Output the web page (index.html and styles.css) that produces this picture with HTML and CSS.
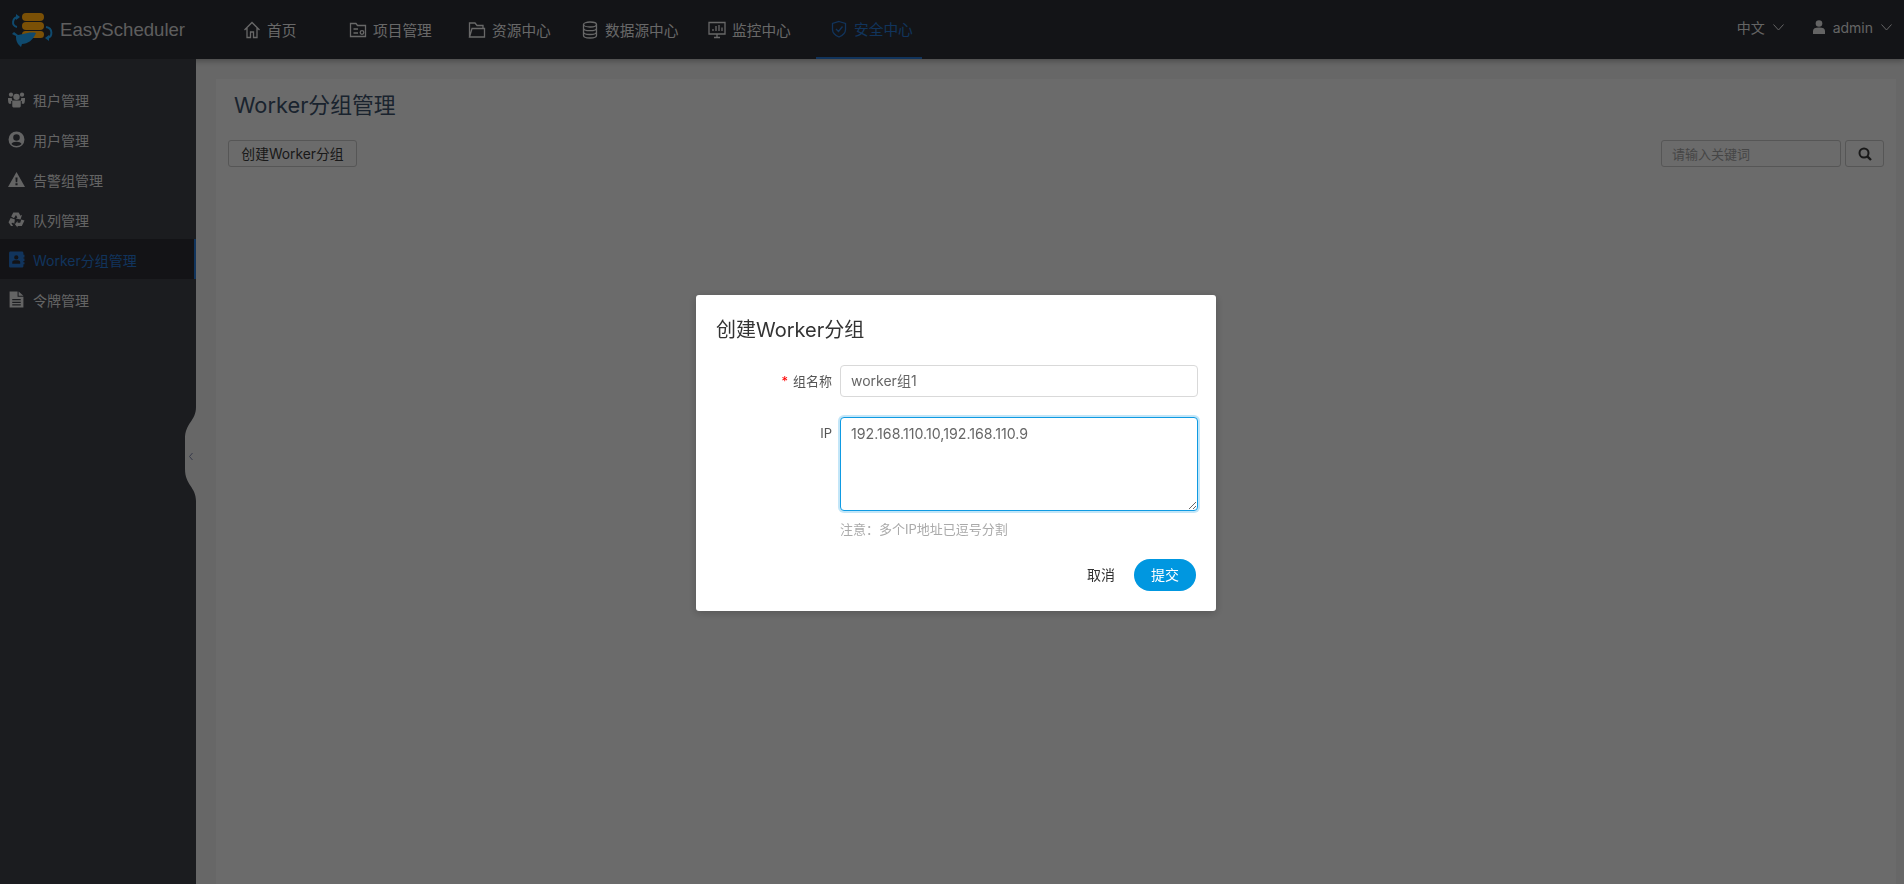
FILE: index.html
```html
<!DOCTYPE html>
<html lang="zh">
<head>
    <meta charset="UTF-8">
    <title>EasyScheduler</title>
    <link rel="stylesheet" href="styles.css">
</head>
<body>
    <header class="topbar">
        <div class="logo">
            <svg width="44" height="38" viewBox="0 0 44 38">
                <rect x="13" y="2" width="22" height="8" rx="4" fill="#f5a00c"/>
                <rect x="13" y="11" width="22" height="8" rx="4" fill="#f5a00c"/>
                <rect x="13" y="20" width="22" height="7" rx="3.5" fill="#f5a00c"/>
                <path d="M10 6 C3 6 2 15 8 16" fill="none" stroke="#1e94dc" stroke-width="2"/>
                <path d="M7 3 L11 6 L7 9 Z" fill="#1e94dc"/>
                <path d="M37 16 C44 17 44 26 38 27" fill="none" stroke="#1e94dc" stroke-width="2"/>
                <path d="M40 24 L36 27 L40 30 Z" fill="#1e94dc"/>
                <path d="M5 21 L9 24 L14 23 C18 22 23 21 27 22 C24 29 19 33 13 33 L12 36 L9 33 C7 30 7 27 7 25 L3 23 Z" fill="#1e94dc"/>
            </svg>
            <span class="logo-text">EasyScheduler</span>
        </div>
        <nav class="nav">
            <a class="nav-item">
                <svg class="nav-icon" viewBox="0 0 18 18"><path d="M1.5 9 L9 1.5 L16.5 9 M4 7 V16.5 H7.5 V11 H10.5 V16.5 H14 V7"/></svg>
                <span>首页</span>
            </a>
            <a class="nav-item">
                <svg class="nav-icon" viewBox="0 0 18 18"><path d="M1.5 15.5 V2.5 H7 L8.5 4.5 H16.5 V15.5 Z M4.5 8 H9 M4.5 12 H9"/><circle cx="13" cy="11.5" r="1.8"/></svg>
                <span>项目管理</span>
            </a>
            <a class="nav-item">
                <svg class="nav-icon" viewBox="0 0 18 18"><path d="M1.5 16 V2 H7 L9 4.5 H15 V7.5 M1.5 16 L4 7.5 H16.5 V16 Z"/></svg>
                <span>资源中心</span>
            </a>
            <a class="nav-item">
                <svg class="nav-icon" viewBox="0 0 18 18"><ellipse cx="9" cy="3.5" rx="6.5" ry="2.5"/><path d="M2.5 3.5 V14.5 C2.5 16 5.5 17 9 17 C12.5 17 15.5 16 15.5 14.5 V3.5 M2.5 7.2 C2.5 8.7 5.5 9.7 9 9.7 C12.5 9.7 15.5 8.7 15.5 7.2 M2.5 11 C2.5 12.5 5.5 13.5 9 13.5 C12.5 13.5 15.5 12.5 15.5 11"/></svg>
                <span>数据源中心</span>
            </a>
            <a class="nav-item">
                <svg class="nav-icon" viewBox="0 0 18 18"><path d="M1 1.5 H17 V13 H1 Z M6 16.5 H12 M9 13 V16.5 M5 10 V8 M8 10 V5 M11 10 V4 M14 10 V6.5"/></svg>
                <span>监控中心</span>
            </a>
            <a class="nav-item active">
                <svg class="nav-icon" viewBox="0 0 18 18"><path d="M9 1.5 L15.5 3.5 V9.5 C15.5 13 12.5 15.5 9 17 C5.5 15.5 2.5 13 2.5 9.5 V3.5 Z M6 9 L8.5 11.5 L12.5 6.5"/></svg>
                <span>安全中心</span>
            </a>
        </nav>
        <div class="top-right">
            <span class="top-link">中文
                <svg class="chevron" viewBox="0 0 11 7"><path d="M0.5 0.5 L5.5 6 L10.5 0.5"/></svg>
            </span>
            <span class="top-link user">
                <svg class="user-icon" viewBox="0 0 12 14"><circle cx="6" cy="3.5" r="3.3"/><path d="M0 14 V11 C0 8.5 2 7.5 6 7.5 C10 7.5 12 8.5 12 11 V14 Z"/></svg>
                admin
                <svg class="chevron" viewBox="0 0 11 7"><path d="M0.5 0.5 L5.5 6 L10.5 0.5"/></svg>
            </span>
        </div>
    </header>

    <div class="body-wrap">
        <aside class="sidebar">
            <a class="side-item">
                <svg class="side-icon" viewBox="0 0 16 16"><circle cx="8" cy="5.5" r="3"/><circle cx="2.8" cy="3.5" r="2"/><circle cx="13.2" cy="3.5" r="2"/><path d="M0 6.5 H3.5 L4 9.5 H3 V12 H1 C0 11 0 8 0 6.5 Z M16 6.5 H12.5 L12 9.5 H13 V12 H15 C16 11 16 8 16 6.5 Z M4 9 H12 V14 C12 15 11 15.5 10 15.5 H6 C5 15.5 4 15 4 14 Z"/></svg>
                <span>租户管理</span>
            </a>
            <a class="side-item">
                <svg class="side-icon" viewBox="0 0 16 16"><path fill-rule="evenodd" d="M8 0.5 A7.5 7.5 0 1 0 8 15.5 A7.5 7.5 0 1 0 8 0.5 Z M8 3 A3 3 0 1 1 8 9.2 A3 3 0 1 1 8 3 Z M3.2 12.2 C4 10.6 5.5 10 8 10 C10.5 10 12 10.6 12.8 12.2 C11.6 13.4 10 14 8 14 C6 14 4.4 13.4 3.2 12.2 Z"/></svg>
                <span>用户管理</span>
            </a>
            <a class="side-item">
                <svg class="side-icon" viewBox="0 0 16 16"><path fill-rule="evenodd" d="M8 1 L16 15 H0 Z M7 6 L7.3 10.5 H8.7 L9 6 Z M7 11.5 V13.3 H9 V11.5 Z"/></svg>
                <span>告警组管理</span>
            </a>
            <a class="side-item">
                <svg class="side-icon" viewBox="0 0 16 16"><path d="M5 1.5 H10 L11.8 4.4 L13.2 3.6 L11.8 8 L7.4 7 L8.8 6.2 L7.5 3.8 L5.6 6.8 L3 5.2 Z M2.5 6.5 L6.5 8 L5.8 12.3 L5 11 L3.2 11.2 L4.8 14 H2.8 L0.5 10.5 Z M15.5 9 L13 14 H9 V15.5 L6.5 12.5 L9 9.5 V11 H11.5 L12.5 8 Z"/></svg>
                <span>队列管理</span>
            </a>
            <a class="side-item active">
                <svg class="side-icon" viewBox="0 0 16 16"><path fill-rule="evenodd" d="M2.5 0.5 H13 C14 0.5 14.5 1 14.5 2 V3.5 H15.5 V6 H14.5 V7 H15.5 V9.5 H14.5 V10.5 H15.5 V12.5 H14.5 V14 C14.5 15 14 15.5 13 15.5 H2.5 C1.5 15.5 1 15 1 14 V2 C1 1 1.5 0.5 2.5 0.5 Z M7.8 4 A2 2 0 1 0 7.8 8 A2 2 0 1 0 7.8 4 Z M4 12 H11.5 V10.5 C11.5 9.3 10.5 8.8 7.8 8.8 C5 8.8 4 9.3 4 10.5 Z"/></svg>
                <span>Worker分组管理</span>
            </a>
            <a class="side-item">
                <svg class="side-icon" viewBox="0 0 16 16"><path fill-rule="evenodd" d="M1.5 0.5 H9 V5.5 H14.5 V15.5 H1.5 Z M10 0.5 L14.5 4.5 H10 Z M4 7.5 V8.7 H12 V7.5 Z M4 10 V11.2 H12 V10 Z M4 12.5 V13.7 H12 V12.5 Z"/></svg>
                <span>令牌管理</span>
            </a>
            <svg class="collapse" width="11" height="94" viewBox="0 0 11 94">
                <path d="M11 0 C11 14 0 16 0 32 V62 C0 78 11 80 11 94 Z" fill="#cfcfcf"/>
                <path d="M7.5 46 L4.5 49.5 L7.5 53" fill="none" stroke="#6c7394" stroke-width="1"/>
            </svg>
        </aside>
        <main class="content">
            <section class="panel">
                <h1 class="panel-title">Worker分组管理</h1>
                <div class="toolbar">
                    <button class="btn btn-create">创建Worker分组</button>
                    <div class="search">
                        <input class="search-input" type="text" placeholder="请输入关键词">
                        <button class="btn search-btn">
                            <svg width="14" height="14" viewBox="0 0 14 14"><circle cx="6" cy="6" r="4.5" fill="none" stroke="#333" stroke-width="2"/><path d="M9.3 9.3 L13 13" stroke="#333" stroke-width="2.4"/></svg>
                        </button>
                    </div>
                </div>
            </section>
        </main>
    </div>

    <div class="mask">
        <div class="modal">
            <div class="modal-title">创建Worker分组</div>
            <div class="form">
                <label class="form-label"><i class="star">*</i>组名称</label>
                <input class="field" type="text" value="worker组1">
                <label class="form-label">IP</label>
                <div>
                    <textarea class="field area">192.168.110.10,192.168.110.9</textarea>
                    <div class="hint">注意：多个IP地址已逗号分割</div>
                </div>
            </div>
            <div class="modal-foot">
                <button class="link-btn">取消</button>
                <button class="submit-btn">提交</button>
            </div>
        </div>
    </div>
</body>
</html>
```

FILE: styles.css
```css
* { box-sizing: border-box; }
html, body { height: 100%; }
body {
    margin: 0;
    overflow: hidden;
    font-family: Inter, "Noto Sans CJK SC", sans-serif;
    font-size: 14px;
    color: #333;
    background: #cfcfcf;
}

.topbar {
    height: 59px;
    display: flex;
    align-items: stretch;
    background: #26282f;
    box-shadow: 0 2px 6px rgba(0, 0, 0, 0.3);
    position: relative;
}
.logo {
    width: 229px;
    display: flex;
    align-items: center;
    padding: 0 0 0 9px;
}
.logo svg { margin-top: 1px; }
.logo-text {
    margin-left: 7px;
    font-family: "Liberation Sans", sans-serif;
    font-size: 18.6px;
    color: #bcbcbc;
}
.nav {
    display: grid;
    grid-template-columns: 106px 119px 113px 127px 122px 106px;
}
.nav-item {
    display: flex;
    align-items: center;
    padding: 0 0 0 14px;
    color: #d0d0d0;
    font-size: 14.7px;
    white-space: nowrap;
}
.nav-icon {
    width: 18px;
    height: 18px;
    margin-right: 6px;
    fill: none;
    stroke: currentColor;
    stroke-width: 1.3;
}
.nav-item.active {
    color: #2268b8;
    border-bottom: 2px solid #2268b8;
}
.top-right {
    margin-left: auto;
    display: flex;
    align-items: center;
    padding: 0 12px 5px 0;
    color: #c8c8c8;
    font-size: 14px;
}
.top-link { display: flex; align-items: center; }
.user { margin-left: 29px; }
.chevron {
    width: 11px;
    height: 7px;
    margin-left: 8px;
    fill: none;
    stroke: currentColor;
}
.user-icon {
    width: 12px;
    height: 14px;
    margin-right: 8px;
    fill: currentColor;
}

.body-wrap {
    display: flex;
    height: calc(100% - 59px);
}
.sidebar {
    width: 196px;
    flex: none;
    padding-top: 20px;
    background: #36383f;
    position: relative;
}
.side-item {
    height: 40px;
    display: flex;
    align-items: center;
    padding: 1px 0 0 8px;
    color: #c8c8c8;
    font-size: 14px;
}
.side-icon {
    width: 17px;
    height: 17px;
    margin-right: 8px;
    fill: currentColor;
}
.side-item.active {
    color: #2268b8;
    background: #26272c;
    border-right: 2px solid #2268b8;
}
.collapse {
    position: absolute;
    right: 0;
    top: 348px;
}

.content {
    flex: 1;
    padding: 20px 8px 0 20px;
}
.panel {
    height: 100%;
    background: #d6d6d6;
}
.panel-title {
    margin: 0;
    height: 61px;
    padding: 9px 18px 0;
    font-size: 21.8px;
    line-height: 34px;
    font-weight: 400;
    color: #34465c;
}
.toolbar {
    display: flex;
    justify-content: space-between;
    padding: 0 12px;
}
.btn {
    height: 27px;
    padding: 0 12px 2px;
    font: inherit;
    font-size: 13.8px;
    color: #333;
    background: #d6d6d6;
    border: 1px solid #acacac;
    border-radius: 3px;
}
.btn-create { width: 129px; }
.search { display: flex; gap: 4px; }
.search-input {
    width: 180px;
    height: 27px;
    padding: 0 10px;
    font: inherit;
    font-size: 13px;
    background: #d6d6d6;
    border: 1px solid #acacac;
    border-radius: 3px;
}
.search-input::placeholder { color: #8c8c8c; }
.search-btn {
    width: 39px;
    padding: 0;
    display: flex;
    align-items: center;
    justify-content: center;
}

.mask {
    position: fixed;
    inset: 0;
    padding: 295px 0 0 8px;
    display: flex;
    justify-content: center;
    align-items: flex-start;
    background: rgba(0, 0, 0, 0.5);
}
.modal {
    width: 520px;
    height: 316px;
    padding: 0 18px 0 20px;
    background: #fff;
    border-radius: 3px;
    box-shadow: 0 2px 8px rgba(0, 0, 0, 0.2);
}
.modal-title {
    height: 70px;
    padding-top: 20px;
    font-size: 20px;
    line-height: 30px;
    color: #333;
}
.form {
    display: grid;
    grid-template-columns: 124px 1fr;
    row-gap: 20px;
}
.form-label {
    padding: 0 8px 0 0;
    font-size: 13px;
    line-height: 32px;
    text-align: right;
    color: #555;
}
.star {
    margin-right: 5px;
    font-style: normal;
    color: #f00;
}
.field {
    display: block;
    width: 100%;
    height: 32px;
    padding: 0 10px 2px;
    font: inherit;
    font-size: 14px;
    color: #666;
    background: #fff;
    border: 1px solid #d9d9d9;
    border-radius: 4px;
    outline: none;
}
.area {
    height: 94px;
    padding: 6px 10px;
    font-size: 14.2px;
    line-height: 20px;
    border-color: #0f9be3;
    box-shadow: 0 0 0 2px rgba(15, 155, 227, 0.25);
}
.hint {
    margin-top: 8px;
    font-size: 13px;
    line-height: 20px;
    color: #aaa;
}
.modal-foot {
    margin-top: 20px;
    padding-right: 2px;
    display: flex;
    justify-content: flex-end;
    align-items: center;
}
.link-btn {
    width: 62px;
    height: 32px;
    margin-right: 2px;
    padding: 0 0 2px;
    font: inherit;
    color: #333;
    background: none;
    border: 0;
}
.submit-btn {
    width: 62px;
    height: 32px;
    padding: 0 0 2px;
    font: inherit;
    color: #fff;
    background: #0097e0;
    border: 0;
    border-radius: 16px;
}
```
